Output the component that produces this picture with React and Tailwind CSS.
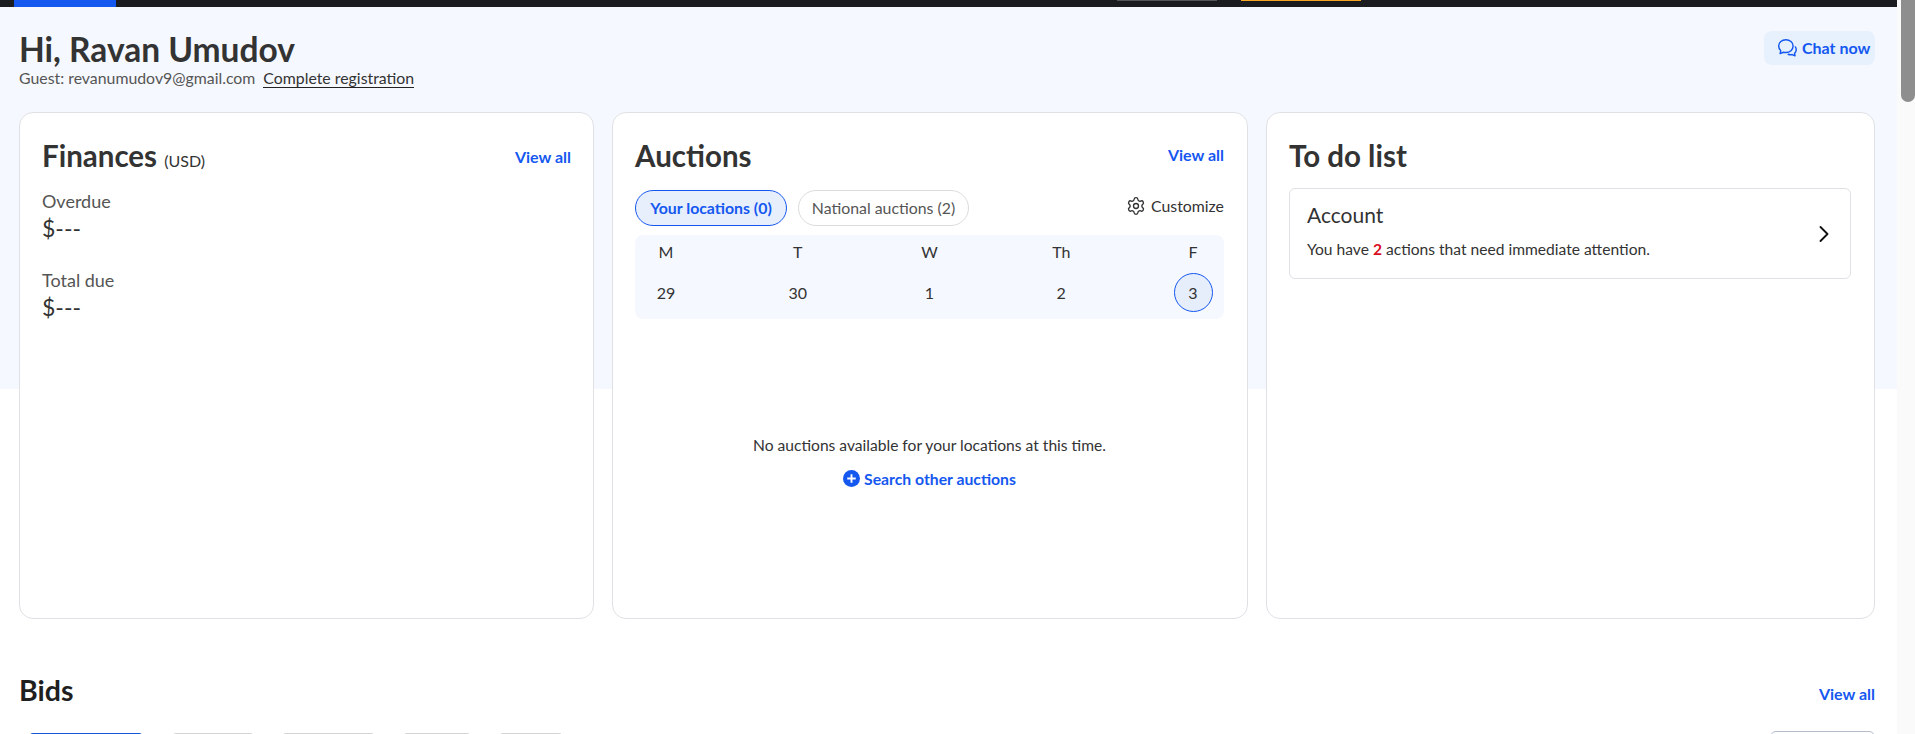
import { ChevronRight, Settings } from 'lucide-react';

const days = [
    { label: 'M', date: '29' },
    { label: 'T', date: '30' },
    { label: 'W', date: '1' },
    { label: 'Th', date: '2' },
    { label: 'F', date: '3', today: true },
];

const ViewAll = ({ className = '' }) => (
    <a className={`text-[16px] leading-5 font-bold text-[#1558f0] ${className}`}>View all</a>
);

const Amount = ({ label, className }) => (
    <div className={className}>
        <div className="text-[18px] leading-6 text-[#555555]">{label}</div>
        <div className="mt-[1px] text-[23px] leading-7 text-[#333333]">$---</div>
    </div>
);

const Card = ({ children, className }) => (
    <section className={`h-[507px] rounded-[14px] border border-[#dfe1e5] bg-white ${className}`}>
        {children}
    </section>
);

const App = () => {
    return (
        <div className="flex h-[734px] overflow-hidden bg-white font-['Lato',sans-serif] text-[#333333]">
            <main className="w-[1897px] shrink-0">
                {/* Top nav, scrolled away apart from its last few pixels */}
                <div className="flex h-[7px] bg-[#1b1c20]">
                    <div className="ml-[14px] h-full w-[102px] bg-[#1558f0]" />
                    <div className="ml-[1001px] h-px w-[100px] bg-[#55565a]" />
                    <div className="ml-[24px] h-px w-[120px] bg-[#f5a623]" />
                </div>

                <div className="bg-[linear-gradient(#f5f8fe_382px,#ffffff_382px)] pr-[22px] pl-[19px]">
                    <header className="flex justify-between pt-[23px]">
                        <div>
                            <h1 className="text-[33.5px] leading-[38px] font-bold">Hi, Ravan Umudov</h1>
                            <p className="flex h-[20px] items-center text-[15.85px] text-[#555555]">
                                Guest: revanumudov9@gmail.com
                                <a className="ml-[8px] border-b border-[#222222] leading-[18px] text-[#333333]">Complete registration</a>
                            </p>
                        </div>
                        <button className="mt-px flex h-[34px] w-[111px] items-center gap-[5px] rounded-lg bg-[#e6f1fd] pl-[13px] text-[16px] font-bold text-[#1558f0]">
                            <svg viewBox="0 0 18 18" fill="none" stroke="currentColor" strokeWidth="1.3" strokeLinejoin="round" strokeLinecap="round" className="h-[20px] w-[20px]">
                                <path d="M8 1.5c-3.6 0-6.5 2.6-6.5 5.8 0 1.6.7 3 1.9 4.1L2.8 14l3-1.2c.7.2 1.4.3 2.2.3 3.6 0 6.5-2.6 6.5-5.8S11.6 1.5 8 1.5z" />
                                <path d="M16.5 8c.7 1 .9 2.2.7 3.3-.2 1-.7 1.8-1.4 2.4l.4 2.3-2.6-1.1c-1.2.3-2.5.2-3.6-.3" />
                            </svg>
                            Chat now
                        </button>
                    </header>

                    <div className="mt-[24px] grid grid-cols-[575px_636px_609px] gap-[18px]">
                        <Card className="px-[22px] pt-[25px]">
                            <div className="flex items-center justify-between">
                                <h2 className="text-[29.5px] leading-9 font-bold">
                                    Finances <span className="text-[16px] font-normal">(USD)</span>
                                </h2>
                                <ViewAll className="mb-[4px]" />
                            </div>
                            <Amount label="Overdue" className="mt-[10px]" />
                            <Amount label="Total due" className="mt-[26px]" />
                        </Card>

                        <Card className="pt-[25px] pr-[23px] pl-[22px]">
                            <div className="flex items-center justify-between">
                                <h2 className="text-[29.5px] leading-9 font-bold">Auctions</h2>
                                <ViewAll className="mb-[2px]" />
                            </div>
                            <div className="mt-[16px] flex items-start justify-between">
                                <div className="flex gap-[11px]">
                                    <button className="h-[36px] w-[152px] rounded-full border border-[#1558f0] bg-[#e8effc] text-[15.85px] font-bold text-[#1558f0]">
                                        Your locations (0)
                                    </button>
                                    <button className="h-[36px] w-[171px] rounded-full border border-[#dcdcdc] bg-white text-[15.85px] text-[#555555]">
                                        National auctions (2)
                                    </button>
                                </div>
                                <div className="mt-[4px] flex items-center gap-[5px] text-[15.85px] leading-6">
                                    <Settings size={20} strokeWidth={1.6} />
                                    Customize
                                </div>
                            </div>
                            <div className="mt-[9px] flex h-[84px] justify-between rounded-lg bg-[#f5f8fe] text-[16px]">
                                {days.map((day) => (
                                    <div key={day.label} className="flex w-[62px] flex-col items-center">
                                        <div className="mt-[6px] leading-[22px]">{day.label}</div>
                                        <div className={`mt-[10px] flex h-[39px] w-[39px] items-center justify-center rounded-full ${day.today ? 'border border-[#1558f0] bg-[#e6edfb]' : ''}`}>
                                            {day.date}
                                        </div>
                                    </div>
                                ))}
                            </div>
                            <div className="mt-[114px] flex flex-col items-center">
                                <p className="text-[15.6px] leading-6">No auctions available for your locations at this time.</p>
                                <a className="mt-[10px] flex items-center gap-[4px] text-[15.75px] font-bold text-[#1558f0]">
                                    <svg viewBox="0 0 18 18" className="h-[17px] w-[17px]">
                                        <circle cx="9" cy="9" r="9" fill="#1558f0" />
                                        <path d="M9 4.5v9M4.5 9h9" stroke="#ffffff" strokeWidth="2" />
                                    </svg>
                                    Search other auctions
                                </a>
                            </div>
                        </Card>

                        <Card className="pt-[25px] pr-[23px] pl-[22px]">
                            <h2 className="text-[29.5px] leading-9 font-bold">To do list</h2>
                            <div className="mt-[14px] flex h-[91px] items-center justify-between rounded-md border border-[#dfe1e5] pr-[12px] pl-[17px]">
                                <div className="self-start pt-[14px]">
                                    <div className="text-[21px] leading-6">Account</div>
                                    <p className="mt-[12px] text-[15.6px] leading-5">
                                        You have <b className="text-[#d90d1e]">2</b> actions that need immediate attention.
                                    </p>
                                </div>
                                <ChevronRight size={28} strokeWidth={1.6} className="text-[#111111]" />
                            </div>
                        </Card>
                    </div>

                    <div className="mt-[55px] flex items-start justify-between">
                        <h2 className="text-[28.5px] leading-8 font-bold text-[#1f1f1f]">Bids</h2>
                        <ViewAll className="mt-[10px]" />
                    </div>

                    <div className="relative mt-[27px] flex">
                        <div className="ml-[11px] h-[40px] w-[112px] rounded-t-[3px] border-t-2 border-[#1558d6]" />
                        <div className="ml-[31px] h-[40px] w-[80px] rounded-t-[3px] border-t border-[#d5d5d5]" />
                        <div className="ml-[30px] h-[40px] w-[91px] rounded-t-[3px] border-t border-[#d5d5d5]" />
                        <div className="ml-[30px] h-[40px] w-[66px] rounded-t-[3px] border-t border-[#d5d5d5]" />
                        <div className="ml-[30px] h-[40px] w-[62px] rounded-t-[3px] border-t border-[#d5d5d5]" />
                        <div className="absolute top-[-2px] right-0 h-[40px] w-[105px] rounded-t-md border border-[#b3bccb]" />
                    </div>
                </div>
            </main>

            {/* Scrollbar */}
            <div className="h-full w-[18px] bg-[#fafafa] pl-[4px]">
                <div className="h-[102px] w-[14px] rounded-b-lg bg-[#8e8e8e]" />
            </div>
        </div>
    );
};

export default App;
